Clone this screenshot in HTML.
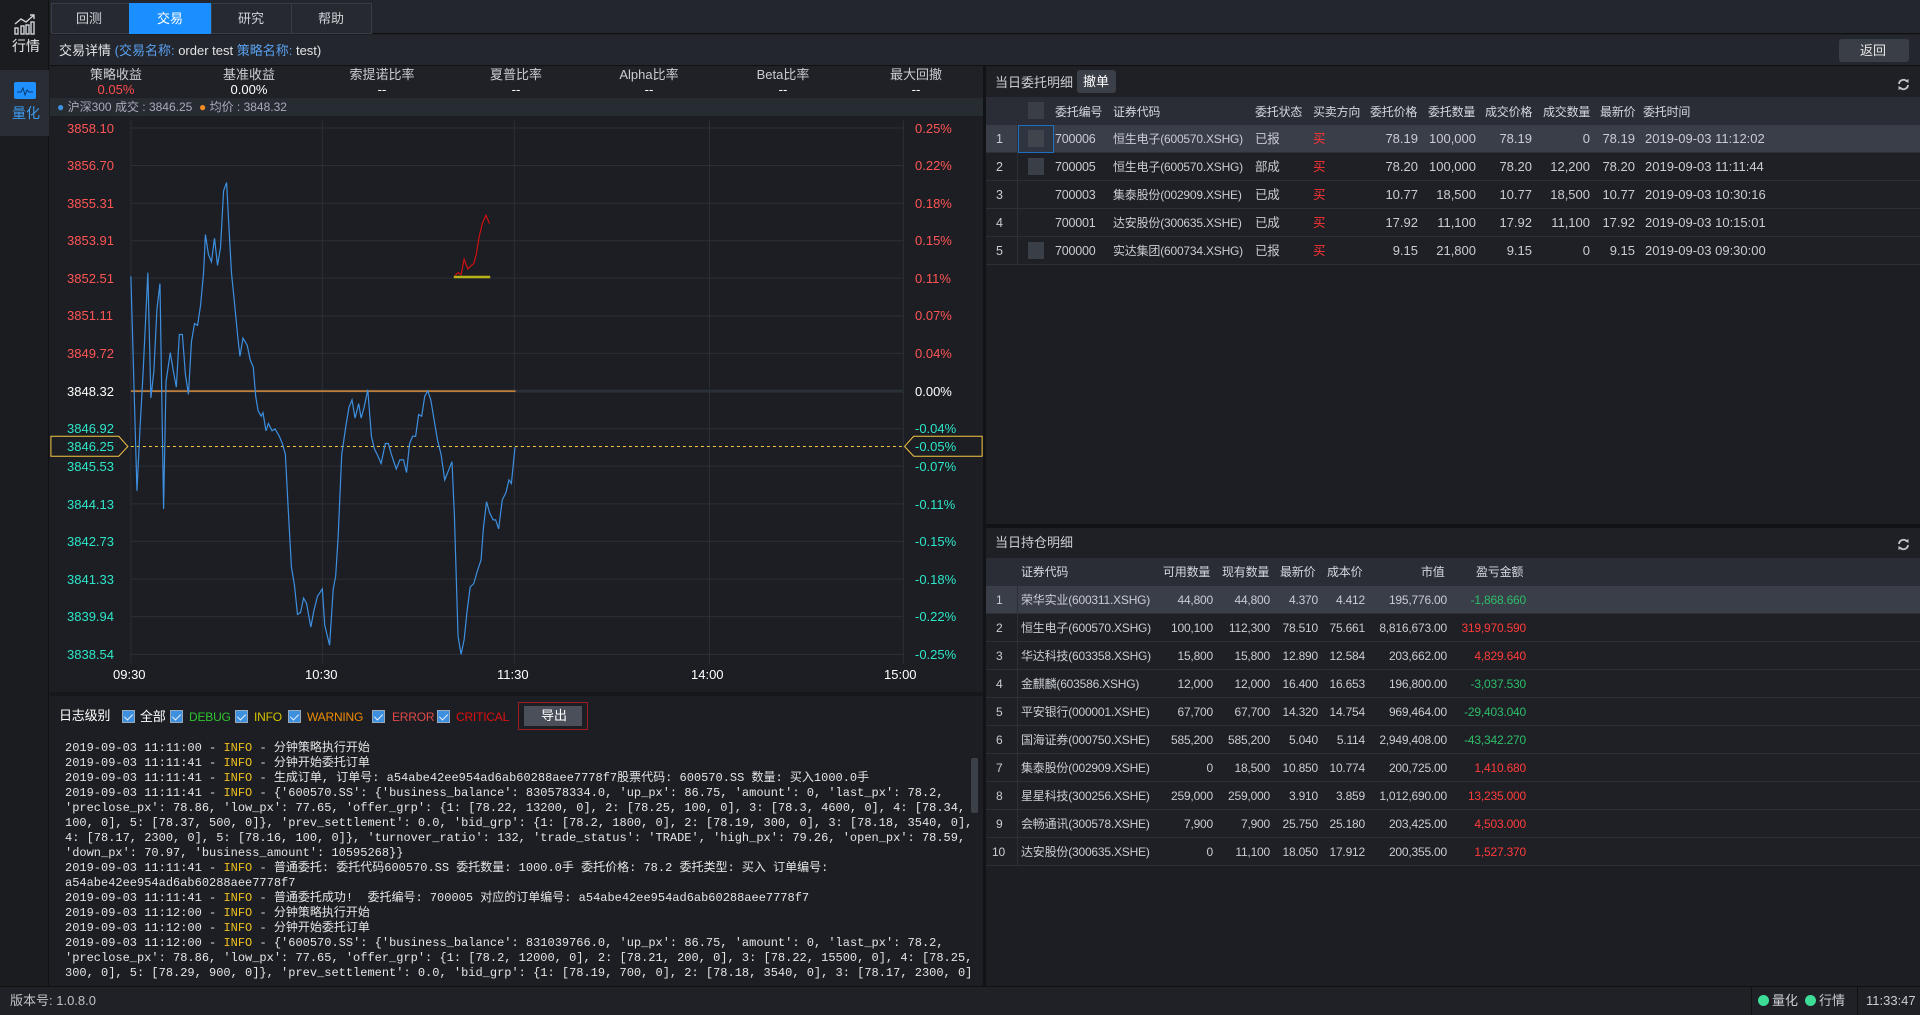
<!DOCTYPE html>
<html><head><meta charset="utf-8"><style>
*{margin:0;padding:0;box-sizing:border-box}
body{width:1920px;height:1015px;overflow:hidden;background:#1c1e23;font-family:"Liberation Sans","Noto Sans CJK SC",sans-serif;font-size:13px;line-height:16px;color:#c9ccd3;position:relative}
.a{position:absolute}
.t{position:absolute;white-space:nowrap;line-height:16px}
.r{text-align:right}
.hd{color:#d5d8de}
.sm{font-size:12px;letter-spacing:-0.2px}
.log{position:absolute;left:65px;top:741px;font-family:"Liberation Mono","Noto Sans CJK SC",monospace;font-size:12px;line-height:15px;color:#e4e4e4;white-space:pre}
.log b{font-weight:normal;color:#f0c020}
.cb{position:absolute;width:13px;height:13px;background:#3d8fe0;border:1px solid #9ab;top:710px}
.cb:after{content:"";position:absolute;left:3px;top:1px;width:4px;height:7px;border:solid #e6f0ff;border-width:0 1.5px 1.5px 0;transform:rotate(45deg)}
.row{position:absolute;left:986px;width:934px;height:28px;border-bottom:1px solid #2c2f36;background:#1e2025}
.sq{position:absolute;left:1028px;width:16px;height:17px;background:#3a3e47}
</style></head><body>
<!-- sidebar -->
<div class="a" style="left:0;top:0;width:49px;height:986px;background:#1a1c20;border-right:1px solid #111"></div>
<div class="a" style="left:0;top:70px;width:49px;height:66px;background:#2a2d33"></div>
<svg class="a" style="left:13px;top:13px" width="24" height="22" viewBox="0 0 24 22"><g fill="none" stroke="#cfd2d8" stroke-width="1.4"><polyline points="2,11 8,6 13,9 21,2"/><polyline points="17,2 21,2 21,6"/><rect x="2" y="15" width="3" height="6"/><rect x="8" y="13" width="3" height="8"/><rect x="13" y="12" width="3" height="9"/><rect x="18" y="9" width="3" height="12"/></g></svg>
<div class="t" style="left:12px;top:38px;font-size:14px;color:#e8e8e8">行情</div>
<div class="a" style="left:14px;top:82px;width:22px;height:17px;background:#1e90ff;border-radius:2px"></div>
<svg class="a" style="left:14px;top:82px" width="22" height="17"><polyline points="3,10 7,10 9,6 11,13 13,8 15,10 19,10" fill="none" stroke="#0a3a70" stroke-width="1"/></svg>
<div class="t" style="left:12px;top:105px;font-size:14px;color:#3c9cf0">量化</div>
<!-- top tabs -->
<div class="a" style="left:50px;top:0;width:1870px;height:34px;background:#23262c;border-bottom:1px solid #111"></div>
<div class="a" style="left:51px;top:3px;width:321px;height:31px;border:1px solid #383c44;background:#262930"></div>
<div class="a" style="left:129px;top:3px;width:82px;height:31px;background:#1a8fff"></div>
<div class="a" style="left:211px;top:3px;width:1px;height:31px;background:#383c44"></div>
<div class="a" style="left:291px;top:3px;width:1px;height:31px;background:#383c44"></div>
<div class="t" style="left:76px;top:11px;color:#d0d3d9">回测</div>
<div class="t" style="left:157px;top:11px;color:#fff">交易</div>
<div class="t" style="left:238px;top:11px;color:#d0d3d9">研究</div>
<div class="t" style="left:318px;top:11px;color:#d0d3d9">帮助</div>
<!-- title bar -->
<div class="a" style="left:50px;top:35px;width:1870px;height:31px;background:#23262c;border-bottom:1px solid #111"></div>
<div class="t" style="left:59px;top:43px;color:#e2e4e8">交易详情 <span style="color:#5aa0f0">(交易名称: </span>order test <span style="color:#5aa0f0"> 策略名称: </span>test)</div>
<div class="a" style="left:1839px;top:39px;width:70px;height:23px;background:#3a3e46;border-radius:3px"></div>
<div class="t" style="left:1860px;top:43px;color:#e8e8e8">返回</div>
<!-- metrics -->
<div class="a" style="left:50px;top:66px;width:933px;height:32px;background:#1f2126"></div>
<div class="t" style="left:116px;top:67px;transform:translateX(-50%);text-align:center;line-height:15px">策略收益<br><span style="color:#ff4d4f">0.05%</span></div>
<div class="t" style="left:249px;top:67px;transform:translateX(-50%);text-align:center;line-height:15px">基准收益<br><span style="color:#fff">0.00%</span></div>
<div class="t" style="left:382px;top:67px;transform:translateX(-50%);text-align:center;line-height:15px">索提诺比率<br><span style="color:#fff">--</span></div>
<div class="t" style="left:516px;top:67px;transform:translateX(-50%);text-align:center;line-height:15px">夏普比率<br><span style="color:#fff">--</span></div>
<div class="t" style="left:649px;top:67px;transform:translateX(-50%);text-align:center;line-height:15px">Alpha比率<br><span style="color:#fff">--</span></div>
<div class="t" style="left:783px;top:67px;transform:translateX(-50%);text-align:center;line-height:15px">Beta比率<br><span style="color:#fff">--</span></div>
<div class="t" style="left:916px;top:67px;transform:translateX(-50%);text-align:center;line-height:15px">最大回撤<br><span style="color:#fff">--</span></div>
<div class="a" style="left:50px;top:98px;width:933px;height:18px;background:#272b32"></div>
<div class="t" style="left:57px;top:99px;font-size:12px;color:#aab"><span style="color:#3d8fe0">●</span> 沪深300 成交 : 3846.25 &nbsp;<span style="color:#f08c20">●</span> 均价 : 3848.32</div>
<!-- chart -->
<svg class="a" style="left:40px;top:120px" width="950" height="570" viewBox="0 0 1568 1568" preserveAspectRatio="none">
<g stroke="#2b2f37" stroke-width="1">
<line x1="150" x2="1425" y1="22" y2="22" vector-effect="non-scaling-stroke"/><line x1="150" x2="1425" y1="125" y2="125" vector-effect="non-scaling-stroke"/><line x1="150" x2="1425" y1="229" y2="229" vector-effect="non-scaling-stroke"/><line x1="150" x2="1425" y1="332" y2="332" vector-effect="non-scaling-stroke"/><line x1="150" x2="1425" y1="435" y2="435" vector-effect="non-scaling-stroke"/><line x1="150" x2="1425" y1="539" y2="539" vector-effect="non-scaling-stroke"/><line x1="150" x2="1425" y1="642" y2="642" vector-effect="non-scaling-stroke"/><line x1="150" x2="1425" y1="849" y2="849" vector-effect="non-scaling-stroke"/><line x1="150" x2="1425" y1="952" y2="952" vector-effect="non-scaling-stroke"/><line x1="150" x2="1425" y1="1056" y2="1056" vector-effect="non-scaling-stroke"/><line x1="150" x2="1425" y1="1159" y2="1159" vector-effect="non-scaling-stroke"/><line x1="150" x2="1425" y1="1263" y2="1263" vector-effect="non-scaling-stroke"/><line x1="150" x2="1425" y1="1366" y2="1366" vector-effect="non-scaling-stroke"/><line x1="150" x2="1425" y1="1470" y2="1470" vector-effect="non-scaling-stroke"/>
<line x1="150" x2="150" y1="0" y2="1495" vector-effect="non-scaling-stroke"/><line x1="466" x2="466" y1="0" y2="1495" vector-effect="non-scaling-stroke"/><line x1="783" x2="783" y1="0" y2="1495" vector-effect="non-scaling-stroke"/><line x1="1105" x2="1105" y1="0" y2="1495" vector-effect="non-scaling-stroke"/><line x1="1425" x2="1425" y1="0" y2="1495" vector-effect="non-scaling-stroke"/>
</g>
<line x1="150" x2="1425" y1="746" y2="746" stroke="#2b2f37" stroke-width="3" vector-effect="non-scaling-stroke"/>
<line x1="150" x2="785" y1="746" y2="746" stroke="#d48a3a" stroke-width="1.5" vector-effect="non-scaling-stroke"/>
<line x1="150" x2="1425" y1="898" y2="898" stroke="#f5c542" stroke-width="1" stroke-dasharray="3,3" vector-effect="non-scaling-stroke"/>
<polyline fill="none" stroke="#3d8fe0" stroke-width="1.2" vector-effect="non-scaling-stroke" points="150,430 160,1020 165,850 170,700 178,420 183,765 188,690 193,520 198,450 204,1070 208,720 215,640 220,690 225,735 230,590 235,590 240,700 245,755 250,610 255,560 260,565 265,510 270,420 273,315 278,370 283,390 288,325 293,400 298,350 303,195 308,172 312,300 316,420 322,520 326,590 330,650 335,600 342,620 347,660 352,680 356,760 360,800 365,815 368,805 373,855 377,835 383,855 388,850 395,870 400,890 405,920 410,1080 415,1230 420,1280 425,1360 430,1355 435,1315 440,1330 447,1395 452,1350 458,1310 466,1290 470,1390 478,1445 484,1290 488,1255 492,1150 498,920 505,840 510,790 515,770 520,820 526,780 530,820 535,790 541,742 547,870 552,905 558,925 563,945 570,890 575,890 580,920 588,960 594,935 600,935 605,970 610,890 615,870 620,870 625,810 630,815 635,760 640,745 645,770 650,820 656,880 662,920 668,990 674,965 680,940 684,1090 690,1420 695,1470 700,1430 705,1350 710,1285 716,1275 722,1240 728,1210 732,1120 737,1050 742,1080 748,1100 752,1100 757,1125 763,1045 769,1025 774,990 778,1000 784,900"/>
<polyline fill="none" stroke="#d01010" stroke-width="1.2" vector-effect="non-scaling-stroke" points="685,428 690,420 695,425 700,383 706,410 712,400 716,395 720,370 725,320 730,285 736,262 742,285"/>
<line x1="683" x2="743" y1="432" y2="432" stroke="#b8b21a" stroke-width="2.5" vector-effect="non-scaling-stroke"/>
<polygon points="18,870 130,870 145,898 130,925 18,925" fill="#1c1e23" stroke="#f5c542" stroke-width="1" vector-effect="non-scaling-stroke"/>
<polygon points="1427,898 1442,870 1555,870 1555,925 1442,925" fill="#1c1e23" stroke="#f5c542" stroke-width="1" vector-effect="non-scaling-stroke"/>
</svg>
<div style="position:absolute;left:67px;top:120px;font-size:13px">
<div class="t" style="top:1px;color:#ff5555">3858.10</div><div class="t" style="top:38px;color:#ff5555">3856.70</div><div class="t" style="top:76px;color:#ff5555">3855.31</div><div class="t" style="top:113px;color:#ff5555">3853.91</div><div class="t" style="top:151px;color:#ff5555">3852.51</div><div class="t" style="top:188px;color:#ff5555">3851.11</div><div class="t" style="top:226px;color:#ff5555">3849.72</div><div class="t" style="top:264px;color:#fff">3848.32</div><div class="t" style="top:301px;color:#2ee6c8">3846.92</div><div class="t" style="top:319px;color:#2ee6c8">3846.25</div><div class="t" style="top:339px;color:#2ee6c8">3845.53</div><div class="t" style="top:377px;color:#2ee6c8">3844.13</div><div class="t" style="top:414px;color:#2ee6c8">3842.73</div><div class="t" style="top:452px;color:#2ee6c8">3841.33</div><div class="t" style="top:489px;color:#2ee6c8">3839.94</div><div class="t" style="top:527px;color:#2ee6c8">3838.54</div>
</div>
<div style="position:absolute;left:915px;top:120px;font-size:13px">
<div class="t" style="top:1px;color:#ff5555">0.25%</div><div class="t" style="top:38px;color:#ff5555">0.22%</div><div class="t" style="top:76px;color:#ff5555">0.18%</div><div class="t" style="top:113px;color:#ff5555">0.15%</div><div class="t" style="top:151px;color:#ff5555">0.11%</div><div class="t" style="top:188px;color:#ff5555">0.07%</div><div class="t" style="top:226px;color:#ff5555">0.04%</div><div class="t" style="top:264px;color:#fff">0.00%</div><div class="t" style="top:301px;color:#2ee6c8">-0.04%</div><div class="t" style="top:319px;color:#2ee6c8">-0.05%</div><div class="t" style="top:339px;color:#2ee6c8">-0.07%</div><div class="t" style="top:377px;color:#2ee6c8">-0.11%</div><div class="t" style="top:414px;color:#2ee6c8">-0.15%</div><div class="t" style="top:452px;color:#2ee6c8">-0.18%</div><div class="t" style="top:489px;color:#2ee6c8">-0.22%</div><div class="t" style="top:527px;color:#2ee6c8">-0.25%</div>
</div>
<div class="t" style="left:113px;top:667px;color:#fff">09:30</div>
<div class="t" style="left:305px;top:667px;color:#fff">10:30</div>
<div class="t" style="left:497px;top:667px;color:#fff">11:30</div>
<div class="t" style="left:691px;top:667px;color:#fff">14:00</div>
<div class="t" style="left:884px;top:667px;color:#fff">15:00</div>
<div class="a" style="left:50px;top:692px;width:933px;height:4px;background:#15171a"></div>
<!-- log -->
<div class="t sm" style="left:59px;top:708px;color:#fff;font-size:13px">日志级别</div>
<div class="cb" style="left:122px"></div><div class="t sm" style="left:140px;top:709px;color:#fff;font-size:13px">全部</div>
<div class="cb" style="left:170px"></div><div class="t sm" style="left:189px;top:709px;color:#2ec52e">DEBUG</div>
<div class="cb" style="left:235px"></div><div class="t sm" style="left:254px;top:709px;color:#d4c400">INFO</div>
<div class="cb" style="left:288px"></div><div class="t sm" style="left:307px;top:709px;color:#f08c00">WARNING</div>
<div class="cb" style="left:372px"></div><div class="t sm" style="left:392px;top:709px;color:#e04848">ERROR</div>
<div class="cb" style="left:437px"></div><div class="t sm" style="left:456px;top:709px;color:#e01010">CRITICAL</div>
<div class="a" style="left:518px;top:702px;width:70px;height:28px;border:1px solid #a01c24"></div>
<div class="a" style="left:524px;top:706px;width:58px;height:20px;background:#4a4f5a"></div>
<div class="t" style="left:541px;top:708px;color:#fff">导出</div>
<div class="log">2019-09-03 11:11:00 - <b>INFO</b> - 分钟策略执行开始
2019-09-03 11:11:41 - <b>INFO</b> - 分钟开始委托订单
2019-09-03 11:11:41 - <b>INFO</b> - 生成订单, 订单号: a54abe42ee954ad6ab60288aee7778f7股票代码: 600570.SS 数量: 买入1000.0手
2019-09-03 11:11:41 - <b>INFO</b> - {'600570.SS': {'business_balance': 830578334.0, 'up_px': 86.75, 'amount': 0, 'last_px': 78.2,
'preclose_px': 78.86, 'low_px': 77.65, 'offer_grp': {1: [78.22, 13200, 0], 2: [78.25, 100, 0], 3: [78.3, 4600, 0], 4: [78.34,
100, 0], 5: [78.37, 500, 0]}, 'prev_settlement': 0.0, 'bid_grp': {1: [78.2, 1800, 0], 2: [78.19, 300, 0], 3: [78.18, 3540, 0],
4: [78.17, 2300, 0], 5: [78.16, 100, 0]}, 'turnover_ratio': 132, 'trade_status': 'TRADE', 'high_px': 79.26, 'open_px': 78.59,
'down_px': 70.97, 'business_amount': 10595268}}
2019-09-03 11:11:41 - <b>INFO</b> - 普通委托: 委托代码600570.SS 委托数量: 1000.0手 委托价格: 78.2 委托类型: 买入 订单编号:
a54abe42ee954ad6ab60288aee7778f7
2019-09-03 11:11:41 - <b>INFO</b> - 普通委托成功!  委托编号: 700005 对应的订单编号: a54abe42ee954ad6ab60288aee7778f7
2019-09-03 11:12:00 - <b>INFO</b> - 分钟策略执行开始
2019-09-03 11:12:00 - <b>INFO</b> - 分钟开始委托订单
2019-09-03 11:12:00 - <b>INFO</b> - {'600570.SS': {'business_balance': 831039766.0, 'up_px': 86.75, 'amount': 0, 'last_px': 78.2,
'preclose_px': 78.86, 'low_px': 77.65, 'offer_grp': {1: [78.2, 12000, 0], 2: [78.21, 200, 0], 3: [78.22, 15500, 0], 4: [78.25,
300, 0], 5: [78.29, 900, 0]}, 'prev_settlement': 0.0, 'bid_grp': {1: [78.19, 700, 0], 2: [78.18, 3540, 0], 3: [78.17, 2300, 0],</div>
<div class="a" style="left:970px;top:752px;width:9px;height:232px;background:#1c1e23"></div>
<div class="a" style="left:971px;top:758px;width:7px;height:55px;background:#3c4048;border-radius:2px"></div>
<!-- divider -->
<div class="a" style="left:983px;top:66px;width:3px;height:920px;background:#111316"></div>
<!-- orders panel -->
<div class="a" style="left:986px;top:67px;width:934px;height:30px;background:#1e2025"></div>
<div class="t" style="left:995px;top:75px">当日委托明细</div>
<div class="a" style="left:1077px;top:70px;width:39px;height:23px;background:#3b3f48;border-radius:3px"></div>
<div class="t" style="left:1083px;top:74px;color:#fff">撤单</div>
<svg class="a" style="left:1897px;top:78px" width="13" height="13" viewBox="0 0 13 13"><path d="M2,6 A4.5,4.5 0 0 1 10,3.5 M11,7 A4.5,4.5 0 0 1 3,9.5" fill="none" stroke="#c0c4cc" stroke-width="1.8"/><path d="M8,3 L11.5,1 L11.5,5 Z M5,10 L1.5,12 L1.5,8 Z" fill="#c0c4cc"/></svg>
<div class="a" style="left:986px;top:97px;width:934px;height:28px;background:#2a2d35"></div>
<div class="sq" style="top:102px"></div>
<div class="sm">
<div class="t hd" style="left:1055px;top:104px">委托编号</div><div class="t hd" style="left:1113px;top:104px">证券代码</div><div class="t hd" style="left:1255px;top:104px">委托状态</div><div class="t hd" style="left:1313px;top:104px">买卖方向</div><div class="t hd" style="left:1370px;top:104px">委托价格</div><div class="t hd" style="left:1428px;top:104px">委托数量</div><div class="t hd" style="left:1485px;top:104px">成交价格</div><div class="t hd" style="left:1543px;top:104px">成交数量</div><div class="t hd" style="left:1600px;top:104px">最新价</div><div class="t hd" style="left:1643px;top:104px">委托时间</div>
</div>
<div class="row" style="top:125px;background:#3a3e48"></div>
<div class="row" style="top:153px"></div>
<div class="row" style="top:181px"></div>
<div class="row" style="top:209px"></div>
<div class="row" style="top:237px"></div>
<div class="a" style="left:1017px;top:125px;width:1px;height:140px;background:#2c2f36"></div>
<div class="a" style="left:1018px;top:125px;width:36px;height:28px;border:1px solid #1e6fbf;background:#2e3440"></div>
<div class="sq" style="top:130px;background:#40444d"></div><div class="sq" style="top:158px"></div><div class="sq" style="top:242px"></div>
<div class="sm" style="position:absolute;left:0;top:0;font-size:12.5px">
<div class="t" style="left:996px;top:131px">1</div><div class="t" style="left:996px;top:159px">2</div><div class="t" style="left:996px;top:187px">3</div><div class="t" style="left:996px;top:215px">4</div><div class="t" style="left:996px;top:243px">5</div>
<div class="t" style="left:1055px;top:131px">700006</div><div class="t" style="left:1055px;top:159px">700005</div><div class="t" style="left:1055px;top:187px">700003</div><div class="t" style="left:1055px;top:215px">700001</div><div class="t" style="left:1055px;top:243px">700000</div>
<div class="t" style="left:1113px;top:131px;font-size:12px">恒生电子(600570.XSHG)</div><div class="t" style="left:1113px;top:159px;font-size:12px">恒生电子(600570.XSHG)</div><div class="t" style="left:1113px;top:187px;font-size:12px">集泰股份(002909.XSHE)</div><div class="t" style="left:1113px;top:215px;font-size:12px">达安股份(300635.XSHE)</div><div class="t" style="left:1113px;top:243px;font-size:12px">实达集团(600734.XSHG)</div>
<div class="t" style="left:1255px;top:131px">已报</div><div class="t" style="left:1255px;top:159px">部成</div><div class="t" style="left:1255px;top:187px">已成</div><div class="t" style="left:1255px;top:215px">已成</div><div class="t" style="left:1255px;top:243px">已报</div>
<div class="t" style="left:1313px;top:131px;color:#ff3333">买</div><div class="t" style="left:1313px;top:159px;color:#ff3333">买</div><div class="t" style="left:1313px;top:187px;color:#ff3333">买</div><div class="t" style="left:1313px;top:215px;color:#ff3333">买</div><div class="t" style="left:1313px;top:243px;color:#ff3333">买</div>
</div>
<div style="position:absolute;left:1318px;top:0;width:100px"><div class="t" style="right:0;top:131px">78.19</div><div class="t" style="right:0;top:159px">78.20</div><div class="t" style="right:0;top:187px">10.77</div><div class="t" style="right:0;top:215px">17.92</div><div class="t" style="right:0;top:243px">9.15</div></div>
<div style="position:absolute;left:1376px;top:0;width:100px"><div class="t" style="right:0;top:131px">100,000</div><div class="t" style="right:0;top:159px">100,000</div><div class="t" style="right:0;top:187px">18,500</div><div class="t" style="right:0;top:215px">11,100</div><div class="t" style="right:0;top:243px">21,800</div></div>
<div style="position:absolute;left:1432px;top:0;width:100px"><div class="t" style="right:0;top:131px">78.19</div><div class="t" style="right:0;top:159px">78.20</div><div class="t" style="right:0;top:187px">10.77</div><div class="t" style="right:0;top:215px">17.92</div><div class="t" style="right:0;top:243px">9.15</div></div>
<div style="position:absolute;left:1490px;top:0;width:100px"><div class="t" style="right:0;top:131px">0</div><div class="t" style="right:0;top:159px">12,200</div><div class="t" style="right:0;top:187px">18,500</div><div class="t" style="right:0;top:215px">11,100</div><div class="t" style="right:0;top:243px">0</div></div>
<div style="position:absolute;left:1535px;top:0;width:100px"><div class="t" style="right:0;top:131px">78.19</div><div class="t" style="right:0;top:159px">78.20</div><div class="t" style="right:0;top:187px">10.77</div><div class="t" style="right:0;top:215px">17.92</div><div class="t" style="right:0;top:243px">9.15</div></div>
<div class="t" style="left:1645px;top:131px">2019-09-03 11:12:02</div><div class="t" style="left:1645px;top:159px">2019-09-03 11:11:44</div><div class="t" style="left:1645px;top:187px">2019-09-03 10:30:16</div><div class="t" style="left:1645px;top:215px">2019-09-03 10:15:01</div><div class="t" style="left:1645px;top:243px">2019-09-03 09:30:00</div>
<!-- positions -->
<div class="a" style="left:986px;top:524px;width:934px;height:4px;background:#111316"></div>
<div class="a" style="left:986px;top:528px;width:934px;height:30px;background:#1e2025"></div>
<div class="t" style="left:995px;top:535px">当日持仓明细</div>
<svg class="a" style="left:1897px;top:538px" width="13" height="13" viewBox="0 0 13 13"><path d="M2,6 A4.5,4.5 0 0 1 10,3.5 M11,7 A4.5,4.5 0 0 1 3,9.5" fill="none" stroke="#c0c4cc" stroke-width="1.8"/><path d="M8,3 L11.5,1 L11.5,5 Z M5,10 L1.5,12 L1.5,8 Z" fill="#c0c4cc"/></svg>
<div class="a" style="left:986px;top:558px;width:934px;height:28px;background:#2a2d35"></div>
<div class="sm">
<div class="t hd" style="left:1021px;top:564px">证券代码</div>
<div class="t hd" style="left:1163px;top:564px">可用数量</div><div class="t hd" style="left:1222px;top:564px">现有数量</div><div class="t hd" style="left:1280px;top:564px">最新价</div><div class="t hd" style="left:1327px;top:564px">成本价</div><div class="t hd" style="left:1421px;top:564px">市值</div><div class="t hd" style="left:1476px;top:564px">盈亏金额</div>
</div>
<div class="row" style="top:586px;background:#3a3e48"></div><div class="row" style="top:614px"></div><div class="row" style="top:642px"></div><div class="row" style="top:670px"></div><div class="row" style="top:698px"></div><div class="row" style="top:726px"></div><div class="row" style="top:754px"></div><div class="row" style="top:782px"></div><div class="row" style="top:810px"></div><div class="row" style="top:838px"></div>
<div class="a" style="left:1017px;top:586px;width:1px;height:280px;background:#2c2f36"></div>
<div class="sm" style="position:absolute;left:0;top:0">
<div class="t" style="left:996px;top:592px">1</div><div class="t" style="left:996px;top:620px">2</div><div class="t" style="left:996px;top:648px">3</div><div class="t" style="left:996px;top:676px">4</div><div class="t" style="left:996px;top:704px">5</div><div class="t" style="left:996px;top:732px">6</div><div class="t" style="left:996px;top:760px">7</div><div class="t" style="left:996px;top:788px">8</div><div class="t" style="left:996px;top:816px">9</div><div class="t" style="left:992px;top:844px">10</div>
<div class="t" style="left:1021px;top:592px">荣华实业(600311.XSHG)</div><div class="t" style="left:1021px;top:620px">恒生电子(600570.XSHG)</div><div class="t" style="left:1021px;top:648px">华达科技(603358.XSHG)</div><div class="t" style="left:1021px;top:676px">金麒麟(603586.XSHG)</div><div class="t" style="left:1021px;top:704px">平安银行(000001.XSHE)</div><div class="t" style="left:1021px;top:732px">国海证券(000750.XSHE)</div><div class="t" style="left:1021px;top:760px">集泰股份(002909.XSHE)</div><div class="t" style="left:1021px;top:788px">星星科技(300256.XSHE)</div><div class="t" style="left:1021px;top:816px">会畅通讯(300578.XSHE)</div><div class="t" style="left:1021px;top:844px">达安股份(300635.XSHE)</div>
</div>
<div class="sm" style="position:absolute;left:1113px;top:0;width:100px"><div class="t" style="right:0;top:592px">44,800</div><div class="t" style="right:0;top:620px">100,100</div><div class="t" style="right:0;top:648px">15,800</div><div class="t" style="right:0;top:676px">12,000</div><div class="t" style="right:0;top:704px">67,700</div><div class="t" style="right:0;top:732px">585,200</div><div class="t" style="right:0;top:760px">0</div><div class="t" style="right:0;top:788px">259,000</div><div class="t" style="right:0;top:816px">7,900</div><div class="t" style="right:0;top:844px">0</div></div>
<div class="sm" style="position:absolute;left:1170px;top:0;width:100px"><div class="t" style="right:0;top:592px">44,800</div><div class="t" style="right:0;top:620px">112,300</div><div class="t" style="right:0;top:648px">15,800</div><div class="t" style="right:0;top:676px">12,000</div><div class="t" style="right:0;top:704px">67,700</div><div class="t" style="right:0;top:732px">585,200</div><div class="t" style="right:0;top:760px">18,500</div><div class="t" style="right:0;top:788px">259,000</div><div class="t" style="right:0;top:816px">7,900</div><div class="t" style="right:0;top:844px">11,100</div></div>
<div class="sm" style="position:absolute;left:1218px;top:0;width:100px"><div class="t" style="right:0;top:592px">4.370</div><div class="t" style="right:0;top:620px">78.510</div><div class="t" style="right:0;top:648px">12.890</div><div class="t" style="right:0;top:676px">16.400</div><div class="t" style="right:0;top:704px">14.320</div><div class="t" style="right:0;top:732px">5.040</div><div class="t" style="right:0;top:760px">10.850</div><div class="t" style="right:0;top:788px">3.910</div><div class="t" style="right:0;top:816px">25.750</div><div class="t" style="right:0;top:844px">18.050</div></div>
<div class="sm" style="position:absolute;left:1265px;top:0;width:100px"><div class="t" style="right:0;top:592px">4.412</div><div class="t" style="right:0;top:620px">75.661</div><div class="t" style="right:0;top:648px">12.584</div><div class="t" style="right:0;top:676px">16.653</div><div class="t" style="right:0;top:704px">14.754</div><div class="t" style="right:0;top:732px">5.114</div><div class="t" style="right:0;top:760px">10.774</div><div class="t" style="right:0;top:788px">3.859</div><div class="t" style="right:0;top:816px">25.180</div><div class="t" style="right:0;top:844px">17.912</div></div>
<div class="sm" style="position:absolute;left:1347px;top:0;width:100px"><div class="t" style="right:0;top:592px">195,776.00</div><div class="t" style="right:0;top:620px">8,816,673.00</div><div class="t" style="right:0;top:648px">203,662.00</div><div class="t" style="right:0;top:676px">196,800.00</div><div class="t" style="right:0;top:704px">969,464.00</div><div class="t" style="right:0;top:732px">2,949,408.00</div><div class="t" style="right:0;top:760px">200,725.00</div><div class="t" style="right:0;top:788px">1,012,690.00</div><div class="t" style="right:0;top:816px">203,425.00</div><div class="t" style="right:0;top:844px">200,355.00</div></div>
<div class="sm" style="position:absolute;left:1426px;top:0;width:100px"><div class="t" style="right:0;top:592px;color:#2ebd6a">-1,868.660</div><div class="t" style="right:0;top:620px;color:#ff3b3b">319,970.590</div><div class="t" style="right:0;top:648px;color:#ff3b3b">4,829.640</div><div class="t" style="right:0;top:676px;color:#2ebd6a">-3,037.530</div><div class="t" style="right:0;top:704px;color:#2ebd6a">-29,403.040</div><div class="t" style="right:0;top:732px;color:#2ebd6a">-43,342.270</div><div class="t" style="right:0;top:760px;color:#ff3b3b">1,410.680</div><div class="t" style="right:0;top:788px;color:#ff3b3b">13,235.000</div><div class="t" style="right:0;top:816px;color:#ff3b3b">4,503.000</div><div class="t" style="right:0;top:844px;color:#ff3b3b">1,527.370</div></div>
<!-- status bar -->
<div class="a" style="left:0;top:986px;width:1920px;height:29px;background:#1f2126;border-top:1px solid #111"></div>
<div class="t" style="left:10px;top:993px;color:#c0c3c9">版本号: 1.0.8.0</div>
<div class="a" style="left:1751px;top:987px;width:1px;height:28px;background:#111"></div>
<div class="a" style="left:1857px;top:987px;width:1px;height:28px;background:#111"></div>
<div class="a" style="left:1758px;top:995px;width:11px;height:11px;border-radius:50%;background:#3ddc97"></div>
<div class="t" style="left:1772px;top:993px">量化</div>
<div class="a" style="left:1805px;top:995px;width:11px;height:11px;border-radius:50%;background:#3ddc97"></div>
<div class="t" style="left:1819px;top:993px">行情</div>
<div class="t" style="left:1866px;top:993px">11:33:47</div>
</body></html>
